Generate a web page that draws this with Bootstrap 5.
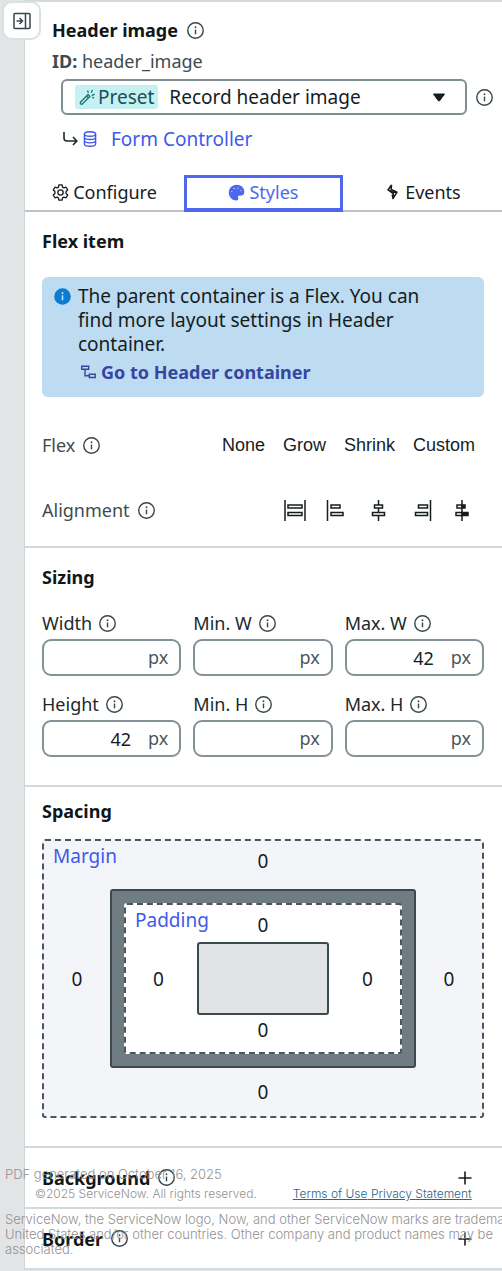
<!DOCTYPE html>
<html lang="en">
<head>
<meta charset="utf-8">
<meta name="viewport" content="width=device-width, initial-scale=1">
<title>Header image – Styles</title>
<link href="https://cdn.jsdelivr.net/npm/bootstrap@5.3.0/dist/css/bootstrap.min.css" rel="stylesheet">
<style>
  body { font-family: "Noto Sans", sans-serif; font-size: 19px; line-height: 24px; color: #161d1f; background: #e2e4e5; }
  svg { display: block; flex: none; }
  .ico { width: 17px; height: 17px; color: #3a464a; }
  .app { overflow: hidden; }
  .panel { margin-left: 24px; background: #fff; border-left: 1px solid #cfd5d7; border-top: 2px solid #d3dadc; }
  .collapse-btn { top: 1px; left: 2px; width: 39px; height: 39px; background: #fff; border: 2px solid #dbe0e2; border-radius: 10px; color: #3a464a; }
  .head { padding: 12px 9px 0 27px; }
  .title-row { height: 32px; gap: 9px; }
  h1, h2 { font-size: 18px; line-height: 24px; font-weight: 700; margin: 0; color: #10171a; }
  .id-row { font-size: 18px; line-height: 30px; color: #3f4b4f; }
  .preset-row { margin: 3px 0 9px 9px; gap: 9px; }
  .preset-box { height: 36px; border: 2px solid #808d93; border-radius: 6px; padding: 0 19px 0 12px; gap: 11px; }
  .preset-tag { background: #c6f1f2; color: #1c4f55; border-radius: 3px; padding: 0 4px; height: 24px; gap: 2px; }
  .plain-select { appearance: none; border: 0; background: transparent; padding: 0; color: inherit; min-width: 0; }
  .ctrl-row { margin-left: 11px; height: 30px; gap: 4px; }
  .ctrl-row a { color: #4159ec; text-decoration: none; margin-left: 9px; }
  .tab-bar { margin-top: 21px; border-bottom: 2px solid #bcc4c7; }
  .tab-bar .tab { border: 3px solid transparent; border-radius: 0; background: none; color: #161d1f; font-size: 18px; height: 37px; margin-bottom: -2px; padding: 0 0 3px; gap: 4px; }
  .tab-bar .tab.active { color: #4d68ee; border-color: #4d68ee; border-bottom-width: 4px; padding-bottom: 2px; }
  .sec { padding: 0 18px 0 17px; border-bottom: 2px solid #d3dadc; }
  .sec-title { padding-top: 17px; }
  .note { background: #bddbf1; border-radius: 6px; padding: 7px 36px 13px 12px; gap: 7px; margin-top: 24px; }
  .note a { color: #3546a0; font-weight: 700; font-size: 18px; text-decoration: none; gap: 5px; margin: 4px 0 0 3px; }
  .lbl { color: #3f4b4f; font-size: 18px; gap: 8px; }
  .flex-row-opts { margin-top: 36px; }
  .align-row { margin: 41px 0 24px; }
  .opts { gap: 18px; padding-right: 9px; }
  .opts button, .aligns button, .fold button { border: 0; background: none; padding: 0; color: #161d1f; }
  .opts button { font: 18px/24px "Liberation Sans", sans-serif; }
  .aligns { gap: 20px; padding-right: 12px; }
  .sizes { display: grid; grid-template-columns: repeat(3, minmax(0, 1fr)); column-gap: 12px; row-gap: 16px; margin-top: 22px; }
  .sizes label { color: #20292c; font-size: 18px; gap: 7px; }
  .unit-box { height: 37px; border: 2px solid #849197; border-radius: 9px; padding: 0 11px; gap: 17px; margin-top: 4px; color: #4a565a; font-size: 18px; line-height: 20px; }
  .unit-box input, .zero { border: 0; background: none; padding: 0; min-width: 0; color: #161d1f; }
  .unit-box input { font-size: 18px; text-align: right; width: 100%; }
  .unit-box span { padding-bottom: 2px; }
  .boxes { display: grid; text-align: center; align-items: center; justify-items: stretch; }
  .boxes .t { grid-area: 1 / 1 / 2 / 4; justify-self: center; align-self: start; }
  .boxes .l { grid-area: 2 / 1; justify-self: center; }
  .boxes .r { grid-area: 2 / 3; justify-self: center; }
  .boxes .b { grid-area: 3 / 1 / 4 / 4; justify-self: center; }
  .boxes .mid { grid-area: 2 / 2; }
  .boxes .name { grid-area: 1 / 1 / 2 / 4; justify-self: start; align-self: start; color: #4159ec; padding: 3px 9px; }
  .zero { width: 32px; text-align: center; font-size: 19px; line-height: 24px; }
  .m-box { grid-template-columns: 66px minmax(0, 1fr) 66px; grid-template-rows: 48px auto 48px; background: #f4f5f8; border: 2px dashed #4b575b; border-radius: 3px; margin-top: 16px; }
  .b-box { background: #6f7c82; border: 2px solid #3c494e; border-radius: 3px; padding: 12px; }
  .p-box { grid-template-columns: 71px minmax(0, 1fr) 71px; grid-template-rows: 37px 73px 37px; background: #fff; border: 2px dashed #4b575b; border-radius: 3px; }
  .boxes .t { margin-top: 8px; }
  .p-box .b { align-self: start; margin-top: 3px; }
  .p-box .l { margin-right: 6px; }
  .p-box .r { margin-left: 6px; }
  .c-box { height: 73px; background: #e2e3e4; border: 2px solid #3c494e; border-radius: 3px; }
  .fold { height: 61px; padding-right: 30px; }
  .legal { bottom: 13px; left: 5px; color: #929292; font: 300 13px/15px Inter, sans-serif; white-space: nowrap; pointer-events: none; }
  .legal p { margin: 0; }
  .legal .links { font-size: 12px; margin: 4px 0 11px 30px; gap: 36px; }
  .legal a { color: #2b668c; pointer-events: auto; }
</style>
</head>
<body>
<svg width="0" height="0" class="position-absolute" aria-hidden="true">
  <symbol id="info" viewBox="0 0 18 18"><circle cx="9" cy="9" r="8.200" fill="none" stroke="currentColor" stroke-width="1.500"/><path d="M9 8v5" stroke="currentColor" stroke-width="1.500"/><circle cx="9" cy="5.600" r="1" fill="currentColor"/></symbol>
  <symbol id="plus" viewBox="0 0 14 14"><path d="M7 .5v13M.5 7h13" stroke="currentColor" stroke-width="1.600"/></symbol>
</svg>
<div class="app position-relative">
  <main class="panel">
    <header class="head">
      <div class="title-row d-flex align-items-center"><h1>Header image</h1><svg class="ico"><use href="#info"/></svg></div>
      <div class="id-row"><b>ID:</b> header_image</div>
      <div class="preset-row d-flex align-items-center">
        <div class="preset-box d-flex align-items-center flex-grow-1">
          <label for="preset" class="preset-tag d-flex align-items-center">
            <svg width="17" height="18" viewBox="0 0 18 18" fill="none" stroke="#1b7378" stroke-width="1.400"><path d="M1.500 14.500 9.600 6.400l2 2-8.100 8.100c-1.300.7-2.700-.7-2-2zM8 8l2 2M10 4.500 9 2M13 4.500l1.200-3M13.500 7.500l3-1.500M14 9.500l2 .8"/></svg>Preset</label>
          <select id="preset" class="plain-select flex-grow-1"><option>Record header image</option></select>
          <svg width="14" height="9" viewBox="0 0 14 9"><path d="M1.500 1h11L7.700 7.700q-.7.800-1.400 0z" fill="#161d1f" stroke="#161d1f" stroke-linejoin="round"/></svg>
        </div>
        <svg class="ico"><use href="#info"/></svg>
      </div>
      <div class="ctrl-row d-flex align-items-center">
        <svg width="15" height="16" viewBox="0 0 15 16" fill="none" stroke="#20292c" stroke-width="1.600"><path d="M1 1v6q0 3 3 3h9.500M10 6l3.800 4-3.800 4"/></svg>
        <svg width="16" height="18" viewBox="0 0 16 18" fill="none" stroke="#4159ec" stroke-width="1.400"><ellipse cx="8" cy="4" rx="5.600" ry="2.300"/><path d="M2.400 4v10c0 3 11.200 3 11.200 0V4M2.400 7.300c0 3 11.200 3 11.200 0M2.400 10.600c0 3 11.200 3 11.200 0"/></svg>
        <a href="#">Form Controller</a>
      </div>
    </header>
    <nav class="tab-bar row g-0" role="tablist" aria-label="Panel">
      <button class="tab col-4 d-flex align-items-center justify-content-center" role="tab">
        <svg width="17" height="17" viewBox="0 0 18 18" fill="none" stroke="currentColor" stroke-width="1.400" stroke-linejoin="round"><path d="M7.300 1h3.400l.5 2.300 1.400.8 2.300-.7 1.700 2.900L14.900 8v2l1.700 1.700-1.700 2.900-2.300-.7-1.400.8-.5 2.300H7.300l-.5-2.300-1.400-.8-2.300.7-1.700-2.900L3.100 10V8L1.400 6.300l1.700-2.900 2.300.7 1.400-.8z"/><circle cx="9" cy="9" r="2.800"/></svg>Configure</button>
      <button class="tab active col-4 d-flex align-items-center justify-content-center" role="tab" aria-selected="true">
        <svg width="17" height="17" viewBox="0 0 18 18"><path d="M9 .8c5 0 8.300 3.400 8.300 7.500 0 3-2 4.200-4.200 4-2-.2-2.800.7-2.300 2.500.5 1.700-.4 2.600-1.800 2.600C4.500 17.400.8 13.700.8 9.200S4.400.8 9 .8z" fill="currentColor"/><g fill="#cdd6fb"><circle cx="4" cy="8" r=".7"/><circle cx="6.500" cy="4.800" r=".7"/><circle cx="10.500" cy="4.300" r=".7"/><circle cx="13.600" cy="7" r=".7"/></g></svg>Styles</button>
      <button class="tab col-4 d-flex align-items-center justify-content-center" role="tab">
        <svg width="17" height="18" viewBox="0 0 17 18" fill="none" stroke="currentColor" stroke-width="1.500" stroke-linejoin="round"><path d="M7.500 1.800 4 7l5.500 2.500M7.500 1.800l-.3 4.700L13 9.200l-4 6.300.3-4.800L4 7M9 15.500l-.8-4M13 9.200H7.500"/></svg>Events</button>
    </nav>

    <section class="sec">
      <h2 class="sec-title">Flex item</h2>
      <div class="note d-flex">
        <svg class="mt-1" width="17" height="17" viewBox="0 0 17 17"><circle cx="8.500" cy="8.500" r="8.300" fill="#0b7bd3"/><path d="M8.500 7.300v5" stroke="#cfe6f7" stroke-width="1.500"/><circle cx="8.500" cy="5" r="1" fill="#cfe6f7"/></svg>
        <div>The parent container is a Flex. You can find more layout settings in Header container.
          <a href="#" class="d-flex align-items-center"><svg width="15" height="14" viewBox="0 0 15 14" fill="none" stroke="currentColor" stroke-width="1.400"><path d="M.7 1.200h7v3h-7zM4 4.200v6.500h4.300M8.300 9.200h5.900v3.300H8.300z"/></svg>Go to Header container</a>
        </div>
      </div>
      <div class="flex-row-opts d-flex align-items-center justify-content-between">
        <span class="lbl d-flex align-items-center">Flex <svg class="ico"><use href="#info"/></svg></span>
        <div class="opts d-flex"><button>None</button><button>Grow</button><button>Shrink</button><button>Custom</button></div>
      </div>
      <div class="align-row d-flex align-items-center justify-content-between">
        <span class="lbl d-flex align-items-center">Alignment <svg class="ico"><use href="#info"/></svg></span>
        <div class="aligns d-flex">
          <button aria-label="Stretch"><svg width="22" height="21" viewBox="0 0 22 21" fill="none" stroke="currentColor" stroke-width="1.500"><path d="M1 0v21M21 0v21M4 5h14v3H4zM4 12.500h14v3H4z"/></svg></button>
          <button aria-label="Start"><svg width="22" height="21" viewBox="0 0 22 21" fill="none" stroke="currentColor" stroke-width="1.500"><path d="M1.500 0v21M5 5h9v3H5zM5 12.500h12v3H5z"/></svg></button>
          <button aria-label="Center"><svg width="22" height="21" viewBox="0 0 22 21" fill="none" stroke="currentColor" stroke-width="1.500"><path d="M10.500 0v5M10.500 8v4.500M10.500 15.500V21M6.500 5h8v3h-8zM4.500 12.500h12v3h-12z"/></svg></button>
          <button aria-label="End"><svg width="22" height="21" viewBox="0 0 22 21" fill="none" stroke="currentColor" stroke-width="1.500"><path d="M20.500 0v21M8.500 5h9v3h-9zM5.500 12.500h12v3h-12z"/></svg></button>
          <button aria-label="Baseline"><svg width="20" height="21" viewBox="-3 0 20 21" fill="none" stroke="currentColor" stroke-width="1.500"><path d="M7 0v21M2 5h5v3H2zM1 12.500h6v3H1z"/><path d="M7 5h3v3H7zM7 12.500h6v3H7z" fill="currentColor"/></svg></button>
        </div>
      </div>
    </section>

    <section class="sec pb-4">
      <h2 class="sec-title">Sizing</h2>
      <div class="sizes mb-1">
        <div><label class="d-flex align-items-center" for="w">Width <svg class="ico"><use href="#info"/></svg></label><div class="unit-box d-flex align-items-center"><input id="w" type="text"><span>px</span></div></div>
        <div><label class="d-flex align-items-center" for="minw">Min. W <svg class="ico"><use href="#info"/></svg></label><div class="unit-box d-flex align-items-center"><input id="minw" type="text"><span>px</span></div></div>
        <div><label class="d-flex align-items-center" for="maxw">Max. W <svg class="ico"><use href="#info"/></svg></label><div class="unit-box d-flex align-items-center"><input id="maxw" type="text" value="42"><span>px</span></div></div>
        <div><label class="d-flex align-items-center" for="h">Height <svg class="ico"><use href="#info"/></svg></label><div class="unit-box d-flex align-items-center"><input id="h" type="text" value="42"><span>px</span></div></div>
        <div><label class="d-flex align-items-center" for="minh">Min. H <svg class="ico"><use href="#info"/></svg></label><div class="unit-box d-flex align-items-center"><input id="minh" type="text"><span>px</span></div></div>
        <div><label class="d-flex align-items-center" for="maxh">Max. H <svg class="ico"><use href="#info"/></svg></label><div class="unit-box d-flex align-items-center"><input id="maxh" type="text"><span>px</span></div></div>
      </div>
    </section>

    <section class="sec pb-4">
      <h2 class="pt-2 mt-1">Spacing</h2>
      <div class="boxes m-box mb-1">
        <span class="name">Margin</span>
        <input class="zero t" value="0" aria-label="Margin top"><input class="zero l" value="0" aria-label="Margin left">
        <div class="b-box mid">
          <div class="boxes p-box">
            <span class="name">Padding</span>
            <input class="zero t" value="0" aria-label="Padding top"><input class="zero l" value="0" aria-label="Padding left">
            <div class="c-box mid"></div>
            <input class="zero r" value="0" aria-label="Padding right"><input class="zero b" value="0" aria-label="Padding bottom">
          </div>
        </div>
        <input class="zero r" value="0" aria-label="Margin right"><input class="zero b" value="0" aria-label="Margin bottom">
      </div>
    </section>

    <section class="sec fold d-flex align-items-center justify-content-between">
      <div class="d-flex align-items-center gap-2"><h2>Background</h2><svg class="ico"><use href="#info"/></svg></div>
      <button aria-label="Expand background"><svg width="14" height="14"><use href="#plus"/></svg></button>
    </section>
    <section class="sec fold d-flex align-items-center justify-content-between">
      <div class="d-flex align-items-center gap-2"><h2>Border</h2><svg class="ico"><use href="#info"/></svg></div>
      <button aria-label="Expand border"><svg width="14" height="14"><use href="#plus"/></svg></button>
    </section>
  </main>
  <button class="collapse-btn position-absolute d-flex align-items-center justify-content-center p-0" aria-label="Collapse panel">
    <svg width="18" height="18" viewBox="0 0 18 18" fill="none" stroke="currentColor" stroke-width="1.500"><rect x="1" y="1.500" width="16" height="15" rx="1"/><path d="M12.500 1.500v15M3.500 9H9M6.500 6l3 3-3 3"/></svg>
  </button>
  <footer class="legal position-absolute">
    <p>PDF generated on October 16, 2025</p>
    <div class="links d-flex"><span>©2025 ServiceNow. All rights reserved.</span><span><a href="#">Terms of Use</a><a href="#"> Privacy Statement</a></span></div>
    <p>ServiceNow, the ServiceNow logo, Now, and other ServiceNow marks are trademarks</p>
    <p>United States and/or other countries. Other company and product names may be</p>
    <p>associated.</p>
  </footer>
</div>
<script src="https://cdn.jsdelivr.net/npm/bootstrap@5.3.0/dist/js/bootstrap.bundle.min.js"></script>
</body>
</html>
